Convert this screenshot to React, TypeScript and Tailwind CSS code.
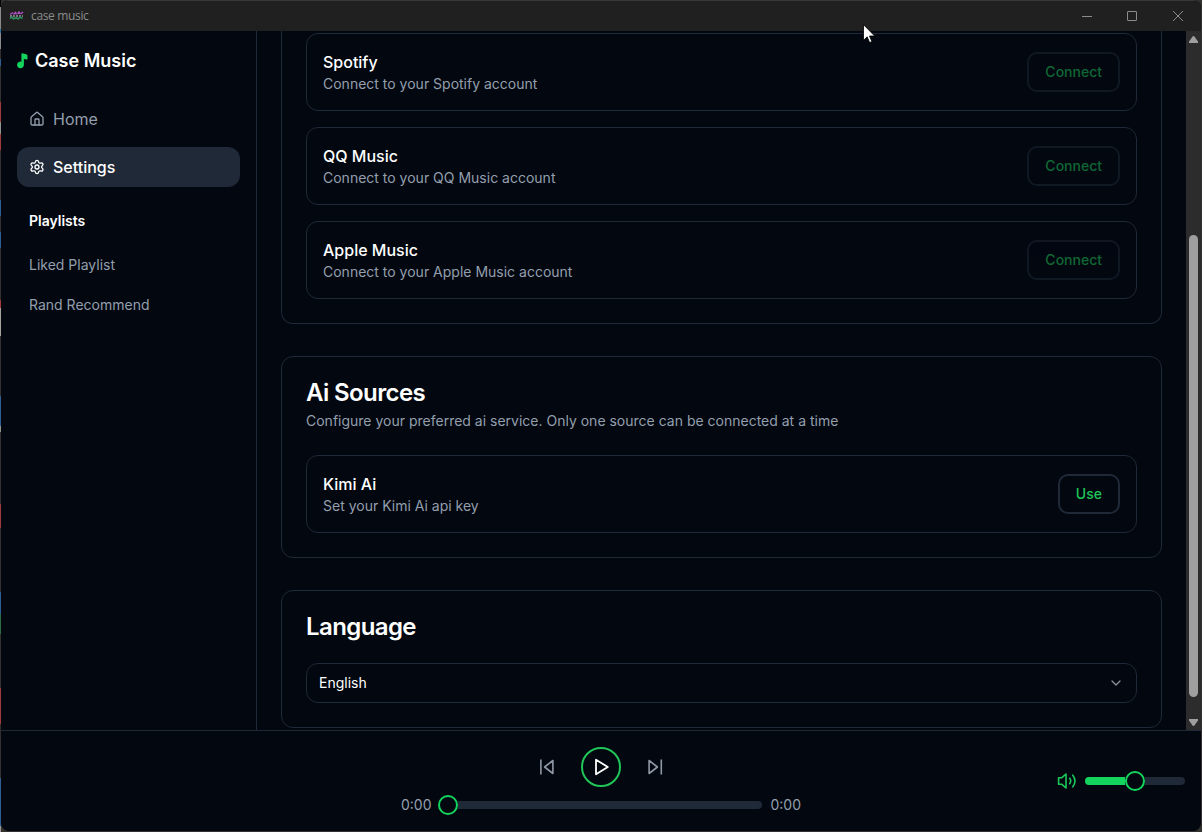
import React from 'react';
import { ChevronDown, House, Settings } from 'lucide-react';

const leftEdge: [string, number][] = [
  ['#050505', 7], ['#8a8a8a', 22], ['#2f6f9f', 4], ['#8a8a8a', 16], ['#33312d', 10], ['#2d5f94', 7],
  ['#33312d', 36], ['#a03c3c', 20], ['#8f948f', 12], ['#a03c3c', 16], ['#33312d', 50], ['#2d5f94', 16],
  ['#33312d', 16], ['#2d5f94', 16], ['#33312d', 52], ['#a03c3c', 8], ['#a5a59d', 28], ['#33312d', 60],
  ['#2d5f94', 30], ['#8f948f', 6], ['#33312d', 72], ['#a03c3c', 24], ['#33312d', 64], ['#2d5f94', 22],
  ['#2f6b45', 20], ['#33312d', 54], ['#a03c3c', 36], ['#33312d', 54], ['#2d5f94', 48], ['#9a9a9e', 6],
];

function EdgeStrip() {
  return (
    <div className="flex w-px shrink-0 flex-col overflow-hidden">
      {leftEdge.map(([color, height], i) => (
        <div key={i} className="shrink-0" style={{ background: color, height }} />
      ))}
    </div>
  );
}

function AppBadge() {
  return (
    <svg width="15" height="10" viewBox="0 0 15 10" fill="none">
      <path d="M1 3.5 4 1.5M4.5 3.5l2-2 1 2M8.5 3 10 1l1 2M11.5 3l2.5-2" stroke="#b14fc4" strokeWidth="1.5" />
      <path d="M1 5h13" stroke="#d7c6dc" strokeWidth="1" strokeDasharray="2 1" />
      <path d="M1 7.5 3 6l1.5 2L7 6.5 9 8l2-2 2.5 1.5" stroke="#2f8f60" strokeWidth="1.6" />
    </svg>
  );
}

function TitleBar() {
  return (
    <header className="flex h-[31px] shrink-0 items-center border-t border-[#383838] bg-[#202020] pb-px pl-2 text-[#8b8b8b]">
      <AppBadge />
      <span className="ml-[7px] pt-px font-['Open_Sans','Noto_Sans',sans-serif] text-[12px] leading-4 tracking-[-0.35px]">case music</span>
      <div className="ml-auto flex items-center gap-[35px] pr-[18px]">
        <svg width="10" height="10" viewBox="0 0 10 10" fill="none" stroke="currentColor"><path d="M0 5.5h10" /></svg>
        <svg width="10" height="10" viewBox="0 0 10 10" fill="none" stroke="currentColor"><rect x=".5" y=".5" width="9" height="9" rx=".5" /></svg>
        <svg className="ml-px" width="10" height="10" viewBox="0 0 10 10" fill="none" stroke="currentColor"><path d="m0 0 10 10M10 0 0 10" /></svg>
      </div>
    </header>
  );
}

function Sidebar() {
  return (
    <aside className="flex w-64 shrink-0 flex-col border-r border-[#1f2937] px-4">
      <div className="mt-4 flex h-7 items-center gap-[7px]">
        <svg width="11" height="16" viewBox="0.6 0 11 16" fill="#13d45c">
          <path d="M5 .9C5 .4 5.3.2 5.8.3l3.9.9c.9.2 1.4.7 1.4 1.6v3c0 .7-.4.9-1 .8L7.5 5.9v5.9A3.4 3.3 0 1 1 5 8.7Z" />
        </svg>
        <h1 className="text-[18px] font-semibold leading-7 text-white">Case Music</h1>
      </div>
      <nav className="mt-6 flex flex-col gap-2">
        <a className="flex h-10 items-center gap-2 rounded-xl px-3 text-[16px] leading-6 text-[#949fad]">
          <House size={16} />
          Home
        </a>
        <a className="flex h-10 items-center gap-2 rounded-xl bg-[#1f2937] px-3 text-[16px] font-medium leading-6 text-white">
          <Settings size={16} />
          Settings
        </a>
      </nav>
      <h2 className="mt-6 px-3 text-[14px] font-semibold leading-5 text-white">Playlists</h2>
      <div className="mt-3.5 flex flex-col px-3 text-[14px] text-[#949fad]">
        <a className="leading-10">Liked Playlist</a>
        <a className="leading-10">Rand Recommend</a>
      </div>
    </aside>
  );
}

function SourceRow({ name, desc, action, disabled }: { name: string; desc: string; action: string; disabled?: boolean }) {
  return (
    <div className="flex h-[78px] items-center justify-between rounded-xl border border-[#1f2937] px-4">
      <div>
        <h3 className="text-[16px] font-medium leading-6 text-white">{name}</h3>
        <p className="text-[14px] leading-5 text-[#949fad]">{desc}</p>
      </div>
      <button
        className={`h-10 rounded-[10px] border-2 border-[#1f2937] px-4 text-[14px] font-medium leading-5 text-[#1fc558] ${disabled ? 'opacity-50' : ''}`}
      >
        {action}
      </button>
    </div>
  );
}

function Main() {
  return (
    <main className="flex min-w-0 grow flex-col gap-8 overflow-hidden px-6">
      <section className="flex shrink-0 flex-col gap-4 rounded-b-xl border-x border-b border-[#1f2937] px-6 pb-6 pt-[2px]">
        <SourceRow name="Spotify" desc="Connect to your Spotify account" action="Connect" disabled />
        <SourceRow name="QQ Music" desc="Connect to your QQ Music account" action="Connect" disabled />
        <SourceRow name="Apple Music" desc="Connect to your Apple Music account" action="Connect" disabled />
      </section>
      <section className="shrink-0 rounded-xl border border-[#1f2937] p-6">
        <h2 className="text-[24px] font-semibold leading-6 tracking-tight text-white">Ai Sources</h2>
        <p className="mb-6 mt-1.5 text-[14px] leading-5 text-[#949fad]">
          Configure your preferred ai service. Only one source can be connected at a time
        </p>
        <SourceRow name="Kimi Ai" desc="Set your Kimi Ai api key" action="Use" />
      </section>
      <section className="shrink-0 rounded-xl border border-[#1f2937] p-6">
        <h2 className="text-[24px] font-semibold leading-6 tracking-tight text-white">Language</h2>
        <div className="mt-6 flex h-10 items-center justify-between rounded-xl border border-[#1f2937] px-3 text-white">
          <span className="text-[14px] leading-5">English</span>
          <ChevronDown size={16} className="text-[#8b8f96]" />
        </div>
      </section>
    </main>
  );
}

function Scrollbar() {
  return (
    <div className="flex w-[15px] shrink-0 flex-col items-center bg-[#2c2c2c] pt-[5px]">
      <svg width="9" height="7" viewBox="0 0 9 7" fill="#9f9f9f"><path d="M3.6.6a1.1 1.1 0 0 1 1.8 0L9 5.6V7H0V5.6Z" /></svg>
      <div className="mt-48 h-[462px] w-[9px] rounded-full bg-[#9f9f9f]" />
      <svg className="mt-[22px]" width="9" height="7" viewBox="0 0 9 7" fill="#9f9f9f"><path d="M3.6 6.4a1.1 1.1 0 0 0 1.8 0L9 1.4V0H0v1.4Z" /></svg>
    </div>
  );
}

function Player() {
  return (
    <footer className="grid h-[101px] shrink-0 grid-cols-[384px_1fr_384px] border-t border-[#1f2937]">
      <div />
      <div className="flex flex-col items-center pt-4">
        <div className="flex items-center gap-6">
          <svg width="20" height="20" viewBox="0 0 20 20" fill="none" stroke="#9098a6" strokeWidth="1.6">
            <path d="M3.9 2.5v15M15.9 3.5v13L7.6 10Z" strokeLinejoin="round" />
          </svg>
          <button className="flex size-10 items-center justify-center rounded-full border-2 border-[#1fc558] text-white">
            <svg width="20" height="20" viewBox="0 0 20 20" fill="none" stroke="currentColor" strokeWidth="1.8" strokeLinejoin="round">
              <path d="M5 2.7v14.6L16.8 10Z" />
            </svg>
          </button>
          <svg width="20" height="20" viewBox="0 0 20 20" fill="none" stroke="#9098a6" strokeWidth="1.6">
            <path d="M16.3 2.5v15M4.1 3.5v13l8.3-6.5Z" strokeLinejoin="round" />
          </svg>
        </div>
        <div className="mt-2 flex items-center text-[14px] leading-5 text-[#949fad]">
          <span className="w-[37px]">0:00</span>
          <div className="flex h-5 w-[324px] items-center">
            <div className="size-5 shrink-0 rounded-full border-2 border-[#13d45c]" />
            <div className="h-2 grow rounded-r-full bg-[#1f2937]" />
          </div>
          <span className="w-[39px] text-right">0:00</span>
        </div>
      </div>
      <div className="flex items-center justify-end gap-2 pr-4">
        <svg width="20" height="20" viewBox="0 0 20 20" fill="none" stroke="#1bc95a" strokeWidth="1.6">
          <path d="M1.6 6.8h3L9 3v14l-4.4-3.8h-3Z" strokeLinejoin="round" />
          <path d="M12.7 7.3q2 2.7 0 5.4M15.8 4.2q4.4 5.8 0 11.6" strokeLinecap="round" />
        </svg>
        <div className="flex h-5 w-[100px] items-center">
          <div className="h-2 w-10 rounded-l-full bg-[#13d45c]" />
          <div className="size-5 shrink-0 rounded-full border-2 border-[#13d45c]" />
          <div className="h-2 w-10 rounded-r-full bg-[#1f2937]" />
        </div>
      </div>
    </footer>
  );
}

export default function App() {
  return (
    <div className="relative flex h-[832px] w-[1202px] overflow-hidden bg-[#33312d] font-['Inter',sans-serif]">
      <EdgeStrip />
      <div className="flex h-[831px] w-[1200px] shrink-0 flex-col overflow-hidden rounded-lg bg-[#020710]">
        <TitleBar />
        <div className="flex h-[699px] shrink-0">
          <Sidebar />
          <Main />
          <Scrollbar />
        </div>
        <Player />
      </div>
      <svg className="absolute left-[863px] top-[24px]" width="13" height="20" viewBox="0 0 13 20">
        <path d="M.5.7v15.6l3.7-3.5 2.4 5.8 2.3-1-2.4-5.6h5.2Z" fill="#fff" stroke="#000" strokeWidth=".8" />
      </svg>
    </div>
  );
}
